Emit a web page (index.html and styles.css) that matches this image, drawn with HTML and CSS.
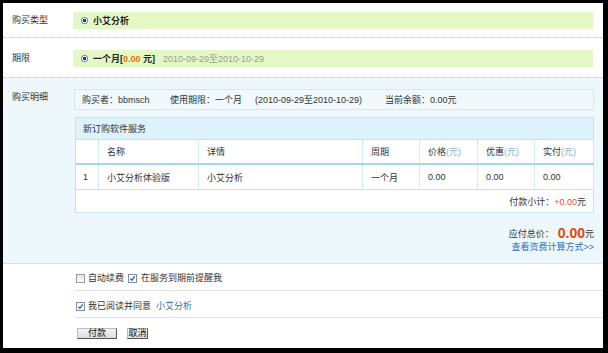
FILE: index.html
```html
<!DOCTYPE html>
<html lang="zh-CN">
<head>
<meta charset="utf-8">
<title>购买</title>
<link rel="stylesheet" href="styles.css">
</head>
<body>
<div class="page">
  <div class="row r1">
    <div class="label">购买类型</div>
    <div class="cell">
      <div class="bar"><span class="radio"></span><b>小艾分析</b></div>
    </div>
  </div>
  <div class="row r2">
    <div class="label">期限</div>
    <div class="cell">
      <div class="bar"><span class="radio"></span><b>一个月[<span class="orange">0.00</span> 元]</b><span class="date">2010-09-29至2010-10-29</span></div>
    </div>
  </div>
  <div class="row r3">
    <div class="label">购买明细</div>
    <div class="cell">
      <div class="info">
        <span class="i1">购买者：bbmsch</span>
        <span class="i2">使用期限：一个月</span>
        <span class="i3">(2010-09-29至2010-10-29)</span>
        <span class="i4">当前余额：0.00元</span>
      </div>
      <table class="svc">
        <colgroup>
          <col class="c1"><col class="c2"><col class="c3"><col class="c4"><col class="c5"><col class="c6"><col class="c7">
        </colgroup>
        <tr class="cap"><td colspan="7">新订购软件服务</td></tr>
        <tr class="head">
          <td></td><td>名称</td><td>详情</td><td>周期</td>
          <td>价格<span class="unit">(元)</span></td>
          <td>优惠<span class="unit">(元)</span></td>
          <td>实付<span class="unit">(元)</span></td>
        </tr>
        <tr class="data">
          <td>1</td><td>小艾分析体验版</td><td>小艾分析</td><td>一个月</td>
          <td>0.00</td><td>0.00</td><td>0.00</td>
        </tr>
        <tr class="sub"><td colspan="7">付款小计：<span class="red">+0.00</span>元</td></tr>
      </table>
      <div class="total">应付总价：<strong>0.00</strong>元</div>
      <div class="calc"><a href="#">查看资费计算方式&gt;&gt;</a></div>
    </div>
  </div>
  <div class="row r4">
    <div class="label"></div>
    <div class="cell">
      <span class="chk"></span><span class="t1">自动续费</span><span class="chk on"><svg viewBox="0 0 8 8" width="8" height="8"><path d="M1.5 4.2 L3.3 6 L6.6 1.6" fill="none" stroke="#2a55b0" stroke-width="1.4"/></svg></span><span class="t2">在服务到期前提醒我</span>
    </div>
  </div>
  <div class="row r5">
    <div class="label"></div>
    <div class="cell">
      <span class="chk on"><svg viewBox="0 0 8 8" width="8" height="8"><path d="M1.5 4.2 L3.3 6 L6.6 1.6" fill="none" stroke="#2a55b0" stroke-width="1.4"/></svg></span><span class="t1">我已阅读并同意</span><a href="#" class="lnk">小艾分析</a>
    </div>
  </div>
  <div class="row r6">
    <div class="label"></div>
    <div class="cell">
      <button class="btn pay">付款</button><button class="btn cancel">取消</button>
    </div>
  </div>
</div>
</body>
</html>
```

FILE: styles.css
```css
html, body {
  margin: 0;
  padding: 0;
}
body {
  background: #000;
  height: 353px;
  overflow: hidden;
  font-family: "Liberation Sans", "Noto Sans CJK SC", sans-serif;
  font-size: 9px;
  color: #333;
}
.page {
  width: 600px;
  height: 345px;
  margin: 3px 0 0 3px;
  background: #fff;
  overflow: hidden;
}
.row {
  display: flex;
}
.label {
  width: 63px;
  padding-left: 9px;
  flex: none;
  line-height: 17px;
  color: #333;
}
.cell {
  flex: 1;
  padding-right: 10px;
}
.r1 {
  padding: 9px 0 8px;
  border-bottom: 1px dotted #c4c4c4;
}
.r2 {
  padding: 12px 0 10px;
  border-bottom: 1px dotted #c4c4c4;
}
.bar {
  height: 17px;
  background: #e4f8c6;
  display: flex;
  align-items: center;
  padding-left: 8px;
  margin-left: -2px;
  color: #222;
}
.bar b {
  font-weight: bold;
}
.radio {
  width: 7px;
  height: 7px;
  border-radius: 50%;
  background: radial-gradient(circle, #17356e 0 1.4px, #fff 1.9px 2.4px, #4f8bd0 2.9px);
  margin-right: 5px;
  flex: none;
}
.orange {
  color: #f07000;
}
.date {
  color: #9a9a9a;
  margin-left: 8px;
}
.r3 {
  background: #eef8fc;
}
.r3 .label {
  padding-top: 11px;
  border-bottom: 1px dotted #c4c4c4;
}
.r3 .cell {
  padding-top: 11px;
  padding-bottom: 10px;
  border-bottom: 1px solid #dde4e6;
  margin-right: 0;
}
.info {
  height: 19px;
  border: 1px solid #d3e9f2;
  background: #f1f9fc;
  display: flex;
  align-items: center;
  padding-left: 7px;
  margin-left: -1px;
  margin-bottom: 7px;
}
.info span {
  flex: none;
  white-space: nowrap;
}
.i1 { width: 88px; }
.i2 { width: 85px; }
.i3 { width: 130px; }
.svc {
  width: 518px;
  table-layout: fixed;
  border-collapse: collapse;
  background: #fff;
  border: 1px solid #c6e4f0;
}
.c1 { width: 23px; }
.c2 { width: 100px; }
.c3 { width: 164px; }
.c4 { width: 57px; }
.c5 { width: 58px; }
.c6 { width: 57px; }
.c7 { width: 59px; }
.svc td {
  padding: 0 0 0 8px;
  white-space: nowrap;
  overflow: hidden;
}
.cap td {
  background: #dcf3fb;
  height: 21px;
  padding-left: 7px;
  border-bottom: 1px solid #c6e4f0;
}
.head td {
  height: 23px;
  border-right: 1px solid #d3ebf5;
  border-bottom: 2px solid #a9d6ef;
}
.data td {
  height: 24px;
  border-right: 1px solid #d3ebf5;
  border-bottom: 1px solid #c6e4f0;
}
.head td:first-child, .data td:first-child {
  padding-left: 7px;
}
.unit {
  color: #8eb0c8;
}
.sub td {
  height: 22px;
  text-align: right;
  padding-right: 7px;
}
.red {
  color: #f24a3a;
}
.total {
  margin-top: 12px;
  height: 16px;
  line-height: 16px;
  text-align: right;
}
.total strong {
  font-size: 14px;
  font-weight: bold;
  color: #e8430c;
  margin-left: 4px;
  vertical-align: -1px;
}
.calc {
  height: 12px;
  line-height: 12px;
  text-align: right;
}
a {
  color: #2f6fc0;
  text-decoration: none;
}
.r4 .cell {
  padding-top: 8px;
  padding-bottom: 6px;
  line-height: 12px;
  border-bottom: 1px solid #e3e5e5;
  display: flex;
  align-items: center;
}
.r5 .cell {
  padding-top: 9px;
  padding-bottom: 5px;
  line-height: 12px;
  border-bottom: 1px solid #e3e5e5;
  display: flex;
  align-items: center;
}
.r4 .label, .r5 .label, .r6 .label {
  line-height: normal;
}
.chk {
  width: 7px;
  height: 7px;
  border: 1px solid #9a9a9a;
  background: linear-gradient(#e6e6e6, #fbfbfb);
  margin-left: 1px;
  flex: none;
  display: flex;
  align-items: center;
  justify-content: center;
}
.chk svg {
  display: block;
  width: 7px;
  height: 7px;
}
.chk.on {
  border-color: #7b8fb8;
  background: #fff;
}
.t1 {
  margin-left: 3px;
  margin-right: 3px;
}
.t2 {
  margin-left: 4px;
}
.lnk {
  margin-left: 2px;
}
.r6 .cell {
  padding-top: 10px;
  display: flex;
  align-items: flex-start;
}
.btn {
  font-family: "Liberation Sans", "Noto Sans CJK SC", sans-serif;
  font-size: 9px;
  color: #111;
  height: 11px;
  line-height: 9px;
  padding: 0;
  margin: 0;
  background: linear-gradient(#f4f4f4, #dcdcdc);
  border: 1px solid;
  border-color: #bbb #555 #555 #bbb;
  box-sizing: border-box;
}
.pay {
  width: 40px;
  margin-left: 2px;
}
.cancel {
  width: 21px;
  margin-left: 10px;
}
```
